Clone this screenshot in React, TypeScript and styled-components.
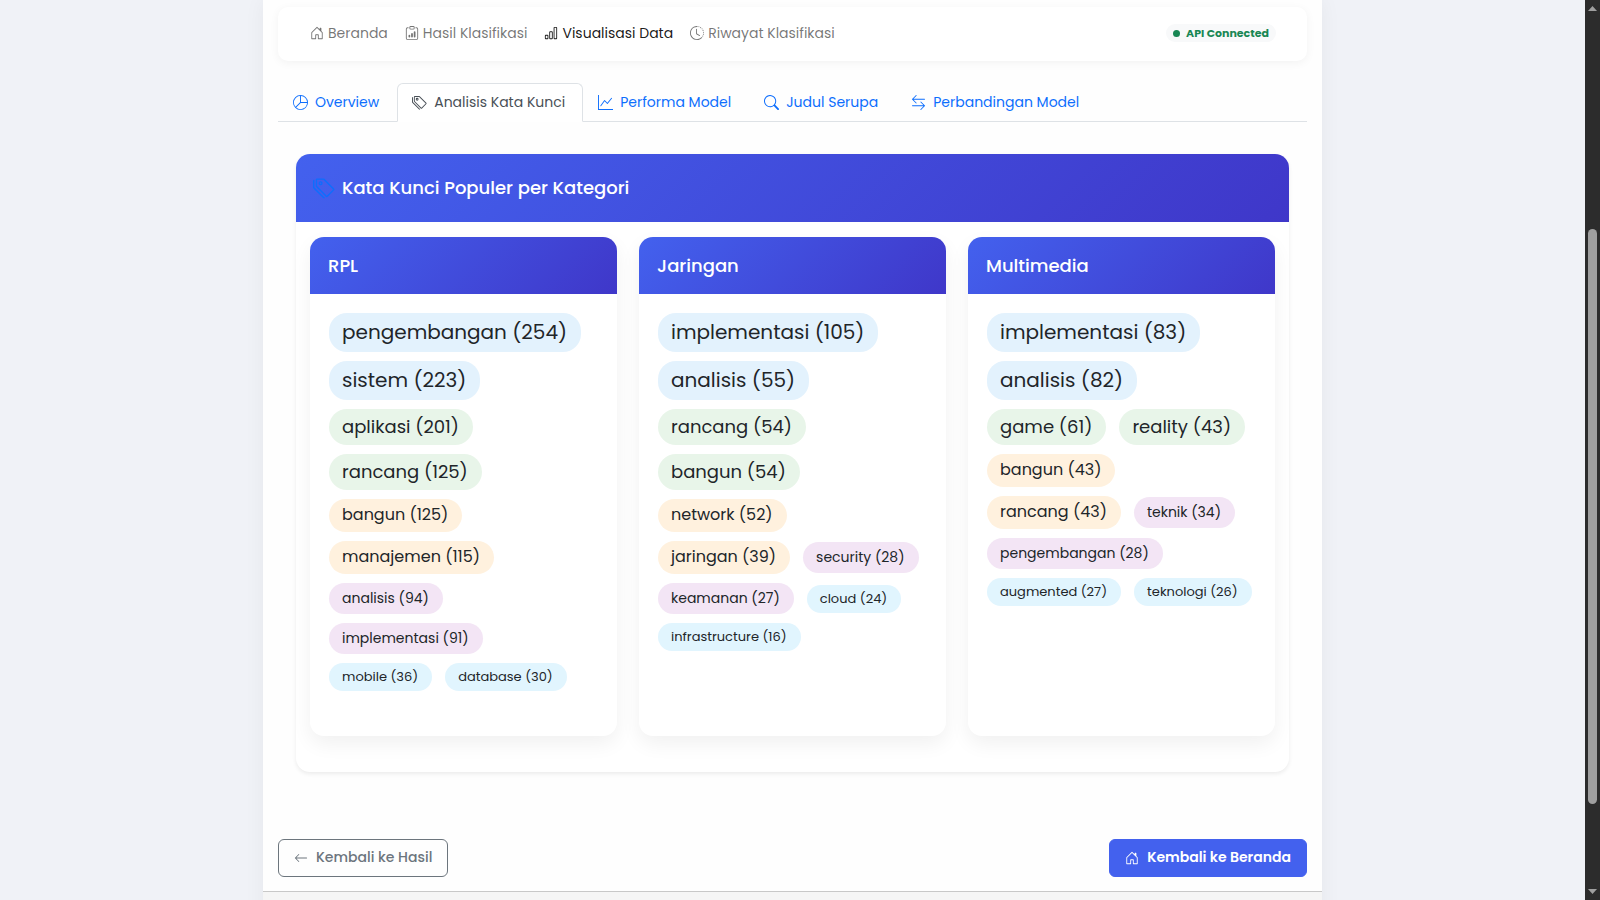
import React from 'react';
import styled, { createGlobalStyle, css } from 'styled-components';
import {
  BsArrowLeft,
  BsArrowLeftRight,
  BsBarChart,
  BsClipboardData,
  BsClockHistory,
  BsGraphUp,
  BsHouseDoor,
  BsPieChart,
  BsSearch,
  BsTags,
} from 'react-icons/bs';

const GlobalStyle = createGlobalStyle`
  *, *::before, *::after { box-sizing: border-box; }
  body {
    margin: 0;
    background: #f0f2f7;
    color: #212529;
    font-family: Poppins, Inter, "Liberation Sans", sans-serif;
    font-size: 14px;
    line-height: 21px;
  }
  a { color: inherit; text-decoration: none; }
  ul { list-style: none; margin: 0; padding: 0; }
  button { font: inherit; cursor: pointer; }
  svg { flex: none; }
`;

const Screen = styled.div`
  display: flex;
  height: 100vh;
  overflow: hidden;
`;

const Page = styled.div`
  flex: 1;
  min-width: 0;
`;

const Shell = styled.div`
  max-width: 1059px;
  min-height: 100vh;
  margin: 0 auto;
  background: #fefefe;
  box-shadow: 0 0 20px rgba(0, 0, 0, 0.05);
`;

const Content = styled.main`
  padding: 7px 15px 14px;
`;

const Navbar = styled.nav`
  display: flex;
  align-items: center;
  justify-content: space-between;
  height: 54px;
  padding: 0 31px 2px 32px;
  background: #fff;
  border-radius: 10px;
  box-shadow: 0 2px 10px rgba(0, 0, 0, 0.05);
`;

const NavList = styled.ul`
  display: flex;
  gap: 17px;
`;

const NavLink = styled.a<{ $active?: boolean }>`
  display: flex;
  align-items: center;
  gap: 4px;
  color: ${(p) => (p.$active ? 'rgba(0, 0, 0, 0.9)' : 'rgba(0, 0, 0, 0.55)')};
`;

const StatusBadge = styled.span`
  display: flex;
  align-items: center;
  gap: 6px;
  height: 18px;
  padding: 0 7px;
  border-radius: 9px;
  background: #f8f9fa;
  color: #198754;
  font-size: 11px;
  font-weight: 700;
`;

const StatusDot = styled.i`
  width: 7px;
  height: 7px;
  border-radius: 50%;
  background: #198754;
`;

const TabBar = styled.div`
  display: flex;
  margin-top: 22px;
  border-bottom: 1px solid #dee2e6;
`;

const Tab = styled.button<{ $active?: boolean }>`
  display: flex;
  align-items: center;
  gap: 7px;
  height: 39px;
  margin-bottom: -1px;
  padding: 0 17px 0 14px;
  border: 1px solid transparent;
  border-radius: 6px 6px 0 0;
  background: none;
  color: #0d6efd;
  ${(p) =>
    p.$active &&
    css`
      border-color: #dee2e6 #dee2e6 #fff;
      background: #fff;
      color: #495057;
    `}
`;

const gradient = 'linear-gradient(135deg, #4361ee, #3f37c9)';

const Panel = styled.section`
  margin: 32px 18px 0;
  padding-bottom: 36px;
  border-radius: 14px;
  background: #fff;
  box-shadow: 0 2px 4px rgba(0, 0, 0, 0.075);
`;

const PanelHeader = styled.header`
  display: flex;
  align-items: center;
  gap: 7px;
  height: 68px;
  padding: 0 17px;
  border-radius: 14px 14px 0 0;
  background: ${gradient};
  svg { color: #0d6efd; }
`;

const Heading = styled.h2`
  margin: 0;
  color: #fff;
  font-size: 18px;
  font-weight: 500;
  line-height: 22px;
`;

const Categories = styled.div`
  display: grid;
  grid-template-columns: repeat(3, 1fr);
  gap: 22px;
  padding: 15px 14px 0;
`;

const CategoryCard = styled.article`
  border-radius: 14px;
  background: #fff;
  box-shadow: 0 8px 20px rgba(0, 0, 0, 0.06);
`;

const CategoryHeader = styled.header`
  display: flex;
  align-items: center;
  height: 57px;
  padding: 0 18px;
  border-radius: 14px 14px 0 0;
  background: ${gradient};
`;

const KeywordList = styled.ul`
  display: flex;
  flex-wrap: wrap;
  align-items: center;
  align-content: flex-start;
  gap: 9px 13px;
  padding: 19px 19px 45px;
`;

const levels = [
  { size: 20, line: 30, color: '#e3f2fd' },
  { size: 18, line: 27, color: '#e8f5e9' },
  { size: 16, line: 24, color: '#fff1de' },
  { size: 14, line: 22, color: '#f3e5f5' },
  { size: 13, line: 19, color: '#e1f5fe' },
];

const Keyword = styled.li<{ $level: number }>`
  padding: 4px 14px 5px 13px;
  border-radius: 18px;
  background: ${(p) => levels[p.$level].color};
  font-size: ${(p) => levels[p.$level].size}px;
  line-height: ${(p) => levels[p.$level].line}px;
`;

const Actions = styled.div`
  display: flex;
  justify-content: space-between;
  margin-top: 67px;
`;

const ActionButton = styled.button<{ $primary?: boolean }>`
  display: flex;
  align-items: center;
  gap: 8px;
  height: 38px;
  padding: 0 15px 1px;
  border: 1px solid ${(p) => (p.$primary ? '#4361ee' : '#6c757d')};
  border-radius: 6px;
  background: ${(p) => (p.$primary ? '#4361ee' : 'transparent')};
  color: ${(p) => (p.$primary ? '#fff' : '#6c757d')};
  font-weight: ${(p) => (p.$primary ? 600 : 500)};
`;

const Footer = styled.footer`
  height: 60px;
  border-top: 1px solid #c8c8c8;
  background: #f5f5f5;
`;

const Scrollbar = styled.div`
  display: flex;
  flex-direction: column;
  align-items: center;
  width: 15px;
  padding: 6px 0;
  background: #2c2c2c;
`;

const Track = styled.div`
  display: grid;
  flex: 1;
  grid-template-rows: 218fr 575fr 85fr;
`;

const Thumb = styled.div`
  grid-row: 2;
  width: 9px;
  border-radius: 5px;
  background: #9f9f9f;
`;

const Arrow = ({ down }: { down?: boolean }) => (
  <svg width="9" height="5" viewBox="0 0 9 5" fill="#9f9f9f" aria-hidden="true">
    <path d={down ? 'M0 0h9L4.500 5z' : 'M0 5h9L4.500 0z'} />
  </svg>
);

const navItems = [
  { label: 'Beranda', Icon: BsHouseDoor },
  { label: 'Hasil Klasifikasi', Icon: BsClipboardData },
  { label: 'Visualisasi Data', Icon: BsBarChart, active: true },
  { label: 'Riwayat Klasifikasi', Icon: BsClockHistory },
];

const tabs = [
  { label: 'Overview', Icon: BsPieChart },
  { label: 'Analisis Kata Kunci', Icon: BsTags, active: true },
  { label: 'Performa Model', Icon: BsGraphUp },
  { label: 'Judul Serupa', Icon: BsSearch },
  { label: 'Perbandingan Model', Icon: BsArrowLeftRight },
];

const categories: { name: string; words: [string, number][] }[] = [
  {
    name: 'RPL',
    words: [
      ['pengembangan', 254], ['sistem', 223], ['aplikasi', 201], ['rancang', 125], ['bangun', 125],
      ['manajemen', 115], ['analisis', 94], ['implementasi', 91], ['mobile', 36], ['database', 30],
    ],
  },
  {
    name: 'Jaringan',
    words: [
      ['implementasi', 105], ['analisis', 55], ['rancang', 54], ['bangun', 54], ['network', 52],
      ['jaringan', 39], ['security', 28], ['keamanan', 27], ['cloud', 24], ['infrastructure', 16],
    ],
  },
  {
    name: 'Multimedia',
    words: [
      ['implementasi', 83], ['analisis', 82], ['game', 61], ['reality', 43], ['bangun', 43],
      ['rancang', 43], ['teknik', 34], ['pengembangan', 28], ['augmented', 27], ['teknologi', 26],
    ],
  },
];

export default function App() {
  return (
    <Screen>
      <GlobalStyle />
      <Page>
        <Shell>
          <Content>
            <Navbar>
              <NavList>
                {navItems.map(({ label, Icon, active }) => (
                  <li key={label}>
                    <NavLink href="#" $active={active}>
                      <Icon size={14} />
                      {label}
                    </NavLink>
                  </li>
                ))}
              </NavList>
              <StatusBadge>
                <StatusDot />
                API Connected
              </StatusBadge>
            </Navbar>

            <TabBar role="tablist">
              {tabs.map(({ label, Icon, active }) => (
                <Tab key={label} type="button" role="tab" aria-selected={!!active} $active={active}>
                  <Icon size={15} />
                  {label}
                </Tab>
              ))}
            </TabBar>

            <Panel>
              <PanelHeader>
                <BsTags size={22} />
                <Heading>Kata Kunci Populer per Kategori</Heading>
              </PanelHeader>
              <Categories>
                {categories.map(({ name, words }) => (
                  <CategoryCard key={name}>
                    <CategoryHeader>
                      <Heading as="h3">{name}</Heading>
                    </CategoryHeader>
                    <KeywordList>
                      {words.map(([word, count], i) => (
                        <Keyword key={word} $level={Math.floor(i / 2)}>
                          {`${word} (${count})`}
                        </Keyword>
                      ))}
                    </KeywordList>
                  </CategoryCard>
                ))}
              </Categories>
            </Panel>

            <Actions>
              <ActionButton type="button">
                <BsArrowLeft size={14} />
                Kembali ke Hasil
              </ActionButton>
              <ActionButton type="button" $primary>
                <BsHouseDoor size={14} />
                Kembali ke Beranda
              </ActionButton>
            </Actions>
          </Content>
          <Footer />
        </Shell>
      </Page>
      <Scrollbar aria-hidden="true">
        <Arrow />
        <Track>
          <Thumb />
        </Track>
        <Arrow down />
      </Scrollbar>
    </Screen>
  );
}
